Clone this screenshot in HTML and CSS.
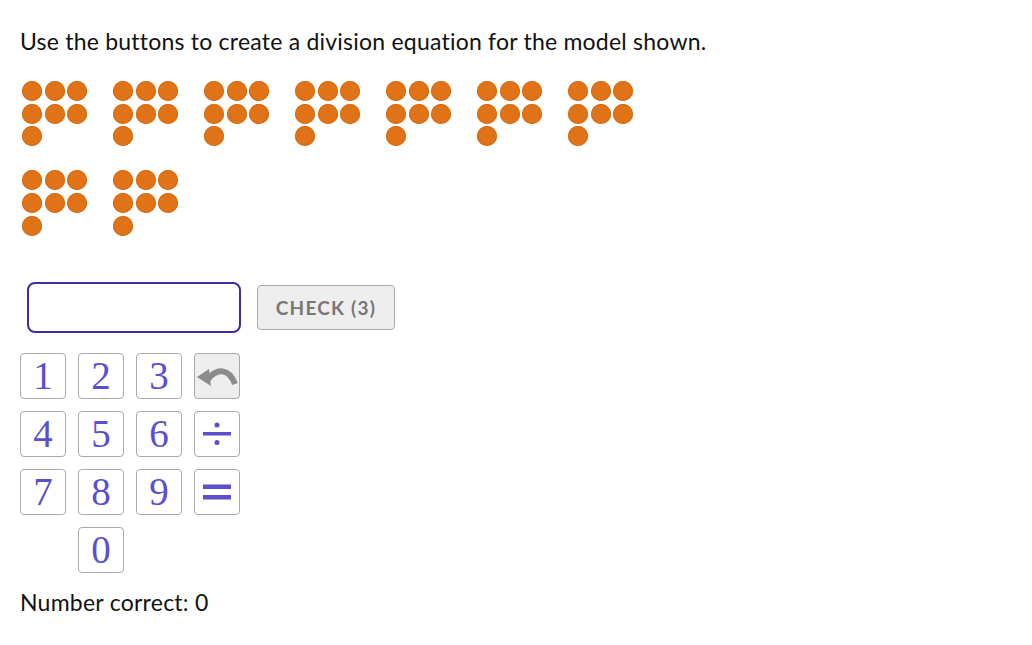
FILE: index.html
```html
<!DOCTYPE html>
<html lang="en">
  <head>
    <meta charset="UTF-8" />
    <title>Division Model</title>
    <link rel="stylesheet" href="styles.css">
  </head>
  <body>
    <div class="page">
      <p class="prompt">Use the buttons to create a division equation for the model shown.</p>

      <div class="model" id="model"></div>

      <div class="answer-row">
        <div class="answer-box"></div>
        <button class="check-btn">CHECK (3)</button>
      </div>

      <div class="keypad">
        <button class="key">1</button>
        <button class="key">2</button>
        <button class="key">3</button>
        <button class="key key-undo">
          <svg width="44" height="44" viewBox="0 0 44 44">
            <path d="M13 25 C22 14 34 14 40 30" fill="none" stroke="#8c8c8c" stroke-width="6" />
            <polygon points="2,23 14,15 16,32" fill="#8c8c8c" />
          </svg>
        </button>
        <button class="key">4</button>
        <button class="key">5</button>
        <button class="key">6</button>
        <button class="key">
          <svg width="28" height="26" viewBox="0 0 28 26">
            <rect x="0" y="11" width="28" height="3.5" fill="#5b4fd0" />
            <circle cx="14" cy="4" r="2.5" fill="#5b4fd0" />
            <circle cx="14" cy="21.5" r="2.5" fill="#5b4fd0" />
          </svg>
        </button>
        <button class="key">7</button>
        <button class="key">8</button>
        <button class="key">9</button>
        <button class="key">
          <svg width="28" height="18" viewBox="0 0 28 18">
            <rect x="0" y="1.5" width="28" height="4.5" fill="#5b4fd0" />
            <rect x="0" y="12" width="28" height="4.5" fill="#5b4fd0" />
          </svg>
        </button>
        <span></span>
        <button class="key">0</button>
      </div>

      <p class="score">Number correct: 0</p>
    </div>
    <script>
      // 9 groups of 7 counters (3 + 3 + 1)
      var model = document.getElementById("model");
      for (var g = 0; g < 9; g++) {
        var group = document.createElement("div");
        group.className = "group";
        for (var d = 0; d < 7; d++) {
          var dot = document.createElement("span");
          dot.className = "dot";
          group.appendChild(dot);
        }
        model.appendChild(group);
      }
    </script>
  </body>
</html>
```

FILE: styles.css
```css
body {
  margin: 0;
  font-family: Lato, 'Liberation Sans', sans-serif;
  color: #111;
  background: #fff;
}
.page {
  padding: 27px 20px;
}
.prompt {
  margin: 0 0 26px 0;
  font-size: 23px;
  line-height: 28px;
  letter-spacing: 0.22px;
}
.model {
  display: flex;
  flex-wrap: wrap;
  width: 640px;
  column-gap: 25px;
  row-gap: 24px;
  padding-left: 2px;
}
.group {
  display: grid;
  grid-template-columns: repeat(3, 20px);
  grid-auto-rows: 20px;
  gap: 2.7px;
  width: 66px;
}
.dot {
  width: 20px;
  height: 20px;
  border-radius: 50%;
  background: #e07318;
  box-shadow: inset 0 0 0 1px #d56b12;
}
.answer-row {
  display: flex;
  align-items: center;
  gap: 16px;
  margin-top: 46px;
  padding-left: 7px;
}
.answer-box {
  width: 210px;
  height: 47px;
  border: 2px solid #3b2fa3;
  border-radius: 8px;
}
.check-btn {
  width: 138px;
  height: 45px;
  background: #eeeeee;
  border: 1px solid #aaa;
  border-radius: 4px;
  color: #777;
  font-family: Lato, 'Liberation Sans', sans-serif;
  font-weight: bold;
  font-size: 19px;
  letter-spacing: 1.2px;
}
.keypad {
  display: grid;
  grid-template-columns: repeat(4, 46px);
  grid-auto-rows: 46px;
  gap: 12px;
  margin-top: 20px;
}
.key {
  display: flex;
  align-items: center;
  justify-content: center;
  padding: 0;
  background: #fff;
  border: 1.5px solid #aaa;
  border-radius: 4px;
  color: #5b4fd0;
  font-family: 'Liberation Serif', serif;
  font-size: 39px;
  line-height: 1;
}
.key-undo {
  background: #eeeeee;
}
.score {
  margin: 15px 0 0 0;
  font-size: 23px;
  line-height: 28px;
  letter-spacing: 0.25px;
}
```
